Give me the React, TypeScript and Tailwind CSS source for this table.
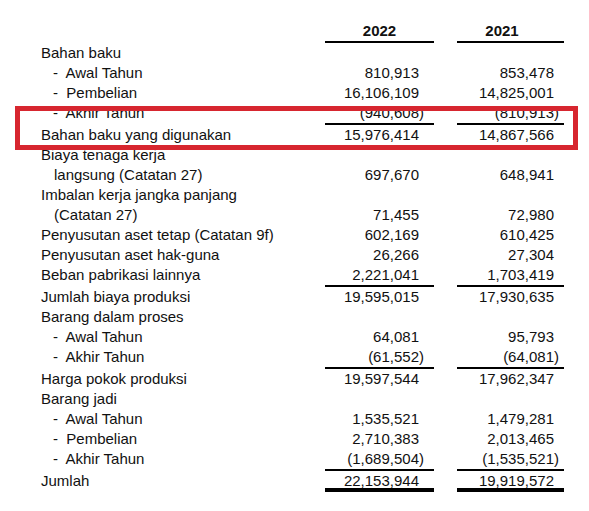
type Row = {
  label: string;
  indent?: "sub" | "wrap";
  v22?: string;
  v21?: string;
  lineTop?: boolean;
  final?: boolean;
};

const rows: Row[] = [
  { label: "Bahan baku" },
  { label: "Awal Tahun", indent: "sub", v22: "810,913", v21: "853,478" },
  { label: "Pembelian", indent: "sub", v22: "16,106,109", v21: "14,825,001" },
  { label: "Akhir Tahun", indent: "sub", v22: "(940,608)", v21: "(810,913)" },
  { label: "Bahan baku yang digunakan", v22: "15,976,414", v21: "14,867,566", lineTop: true },
  { label: "Biaya tenaga kerja" },
  { label: "langsung (Catatan 27)", indent: "wrap", v22: "697,670", v21: "648,941" },
  { label: "Imbalan kerja jangka panjang" },
  { label: "(Catatan 27)", indent: "wrap", v22: "71,455", v21: "72,980" },
  { label: "Penyusutan aset tetap (Catatan 9f)", v22: "602,169", v21: "610,425" },
  { label: "Penyusutan aset hak-guna", v22: "26,266", v21: "27,304" },
  { label: "Beban pabrikasi lainnya", v22: "2,221,041", v21: "1,703,419" },
  { label: "Jumlah biaya produksi", v22: "19,595,015", v21: "17,930,635", lineTop: true },
  { label: "Barang dalam proses" },
  { label: "Awal Tahun", indent: "sub", v22: "64,081", v21: "95,793" },
  { label: "Akhir Tahun", indent: "sub", v22: "(61,552)", v21: "(64,081)" },
  { label: "Harga pokok produksi", v22: "19,597,544", v21: "17,962,347", lineTop: true },
  { label: "Barang jadi" },
  { label: "Awal Tahun", indent: "sub", v22: "1,535,521", v21: "1,479,281" },
  { label: "Pembelian", indent: "sub", v22: "2,710,383", v21: "2,013,465" },
  { label: "Akhir Tahun", indent: "sub", v22: "(1,689,504)", v21: "(1,535,521)" },
  { label: "Jumlah", v22: "22,153,944", v21: "19,919,572", lineTop: true, final: true },
];

/** Angka rata kanan; angka positif diberi ")" tak terlihat supaya sejajar. */
function Angka({ v }: { v?: string }) {
  if (!v) return null;
  const negatif = v.startsWith("(");
  return (
    <>
      {v}
      {negatif ? null : <span className="invisible">)</span>}
    </>
  );
}

export default function App() {
  return (
    <div
      className="relative min-h-[511px] w-[589px] bg-white text-[15px] leading-[20px] text-[#111]"
      style={{ fontFamily: '"Liberation Sans", Arial, sans-serif' }}
    >
      <div className="pl-[41px] pr-[25px] pt-[21px]">
        {/* Kepala tabel */}
        <div className="grid grid-cols-[1fr_109px_107px] gap-x-[23px]">
          <div />
          <div className="border-b-2 border-black text-center font-bold">2022</div>
          <div className="border-b-2 border-black pr-[17px] text-center font-bold">2021</div>
        </div>

        {rows.map((r, i) => {
          const garis = r.lineTop ? "border-t-2 border-black" : "";
          const akhir = r.final ? "h-[23px] border-b-4 border-black" : "";
          return (
            <div key={i} className="grid grid-cols-[1fr_109px_107px] gap-x-[23px]">
              <div
                className={`whitespace-pre ${r.lineTop ? "pt-[2px]" : ""} ${
                  r.indent === "wrap" ? "pl-[13px]" : r.indent === "sub" ? "pl-[12px]" : ""
                }`}
              >
                {r.indent === "sub" ? `-  ${r.label}` : r.label}
              </div>
              <div className={`pr-[10px] text-right ${garis} ${akhir}`}>
                <Angka v={r.v22} />
              </div>
              <div className={`pr-[5px] text-right ${garis} ${akhir}`}>
                <Angka v={r.v21} />
              </div>
            </div>
          );
        })}
      </div>

      {/* Kotak sorotan merah */}
      <div className="pointer-events-none absolute left-[15px] top-[106px] h-[44px] w-[563px] border-[5px] border-[#d7262f]" />
    </div>
  );
}
